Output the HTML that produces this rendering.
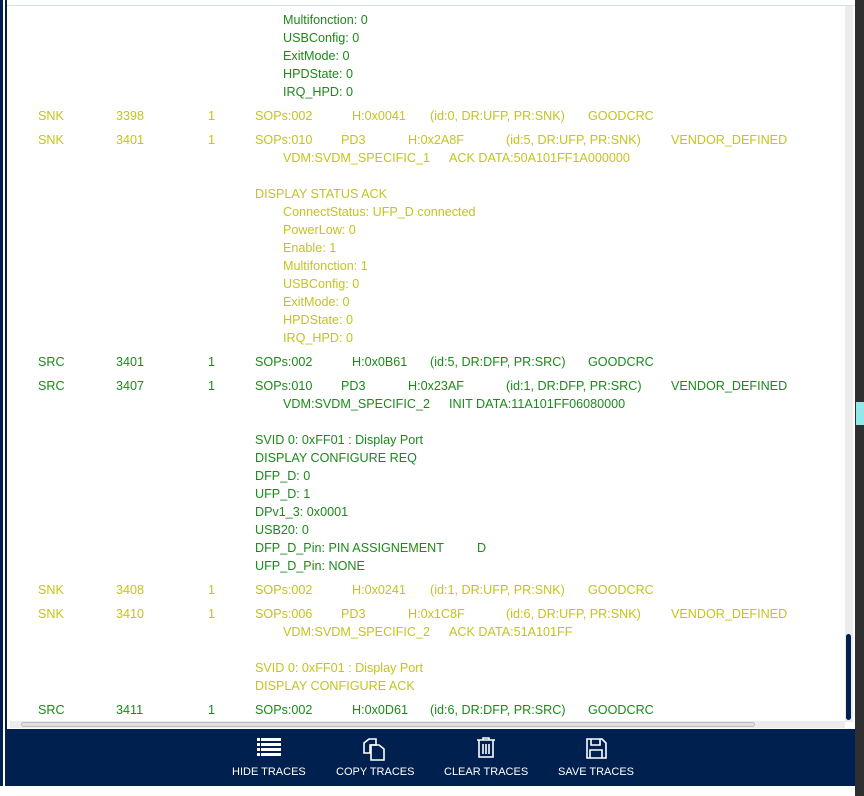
<!DOCTYPE html>
<html><head><meta charset="utf-8"><style>
*{margin:0;padding:0;box-sizing:border-box}
body{width:864px;height:796px;position:relative;overflow:hidden;background:#fff;font-family:"Liberation Sans",Arial,sans-serif;font-size:12.6px}
.t{position:absolute;white-space:nowrap;line-height:16px;height:16px;margin-top:1px}
.g{color:#1a8a1a}.y{color:#c4c41c}
.bar{position:absolute;left:7px;top:729px;width:848px;height:57px;background:#002050}
.lbl{position:absolute;top:766px;color:#fff;font-size:11px;white-space:nowrap}
</style></head><body>
<div style="position:absolute;left:0;top:0;width:7px;height:796px;background:#002050"></div>
<div style="position:absolute;left:3px;top:0;width:2px;height:786px;background:#fff"></div>
<div style="position:absolute;left:0;top:786px;width:7px;height:10px;background:#fff"></div>
<div style="position:absolute;left:7px;top:5px;width:848px;height:1px;background:#cfe0ee"></div>
<div style="position:absolute;left:855px;top:0;width:9px;height:796px;background:#2f2f2f"></div>
<div style="position:absolute;left:856px;top:402px;width:8px;height:23px;background:#90e8e8"></div>
<div style="position:absolute;left:845px;top:6px;width:8px;height:716px;background:#ececec"></div>
<div style="position:absolute;left:846px;top:634px;width:5px;height:86px;background:#002050;border-radius:3px"></div>
<div style="position:absolute;left:10px;top:721px;width:835px;height:7px;background:#ececec"></div>
<div style="position:absolute;left:21px;top:722px;width:734px;height:5px;border:1px solid #bbb;border-radius:3px;background:#e0e0e0"></div>

<div class="t g" style="left:283px;top:11px">Multifonction: 0</div>
<div class="t g" style="left:283px;top:29px">USBConfig: 0</div>
<div class="t g" style="left:283px;top:47px">ExitMode: 0</div>
<div class="t g" style="left:283px;top:65px">HPDState: 0</div>
<div class="t g" style="left:283px;top:83px">IRQ_HPD: 0</div>

<div class="t y" style="left:38px;top:107px">SNK</div><div class="t y" style="left:116px;top:107px">3398</div><div class="t y" style="left:208px;top:107px">1</div><div class="t y" style="left:255px;top:107px">SOPs:002</div><div class="t y" style="left:352px;top:107px">H:0x0041</div><div class="t y" style="left:430px;top:107px">(id:0, DR:UFP, PR:SNK)</div><div class="t y" style="left:588px;top:107px">GOODCRC</div>

<div class="t y" style="left:38px;top:131px">SNK</div><div class="t y" style="left:116px;top:131px">3401</div><div class="t y" style="left:208px;top:131px">1</div><div class="t y" style="left:255px;top:131px">SOPs:010</div><div class="t y" style="left:341px;top:131px">PD3</div><div class="t y" style="left:408px;top:131px">H:0x2A8F</div><div class="t y" style="left:506px;top:131px">(id:5, DR:UFP, PR:SNK)</div><div class="t y" style="left:671px;top:131px">VENDOR_DEFINED</div>
<div class="t y" style="left:283px;top:149px">VDM:SVDM_SPECIFIC_1</div><div class="t y" style="left:449px;top:149px">ACK DATA:50A101FF1A000000</div>
<div class="t y" style="left:255px;top:185px">DISPLAY STATUS ACK</div>
<div class="t y" style="left:283px;top:203px">ConnectStatus: UFP_D connected</div>
<div class="t y" style="left:283px;top:221px">PowerLow: 0</div>
<div class="t y" style="left:283px;top:239px">Enable: 1</div>
<div class="t y" style="left:283px;top:257px">Multifonction: 1</div>
<div class="t y" style="left:283px;top:275px">USBConfig: 0</div>
<div class="t y" style="left:283px;top:293px">ExitMode: 0</div>
<div class="t y" style="left:283px;top:311px">HPDState: 0</div>
<div class="t y" style="left:283px;top:329px">IRQ_HPD: 0</div>

<div class="t g" style="left:38px;top:353px">SRC</div><div class="t g" style="left:116px;top:353px">3401</div><div class="t g" style="left:208px;top:353px">1</div><div class="t g" style="left:255px;top:353px">SOPs:002</div><div class="t g" style="left:352px;top:353px">H:0x0B61</div><div class="t g" style="left:430px;top:353px">(id:5, DR:DFP, PR:SRC)</div><div class="t g" style="left:588px;top:353px">GOODCRC</div>

<div class="t g" style="left:38px;top:377px">SRC</div><div class="t g" style="left:116px;top:377px">3407</div><div class="t g" style="left:208px;top:377px">1</div><div class="t g" style="left:255px;top:377px">SOPs:010</div><div class="t g" style="left:341px;top:377px">PD3</div><div class="t g" style="left:408px;top:377px">H:0x23AF</div><div class="t g" style="left:506px;top:377px">(id:1, DR:DFP, PR:SRC)</div><div class="t g" style="left:671px;top:377px">VENDOR_DEFINED</div>
<div class="t g" style="left:283px;top:395px">VDM:SVDM_SPECIFIC_2</div><div class="t g" style="left:449px;top:395px">INIT DATA:11A101FF06080000</div>
<div class="t g" style="left:255px;top:431px">SVID 0: 0xFF01 : Display Port</div>
<div class="t g" style="left:255px;top:449px">DISPLAY CONFIGURE REQ</div>
<div class="t g" style="left:255px;top:467px">DFP_D: 0</div>
<div class="t g" style="left:255px;top:485px">UFP_D: 1</div>
<div class="t g" style="left:255px;top:503px">DPv1_3: 0x0001</div>
<div class="t g" style="left:255px;top:521px">USB20: 0</div>
<div class="t g" style="left:255px;top:539px">DFP_D_Pin: PIN ASSIGNEMENT</div><div class="t g" style="left:477px;top:539px">D</div>
<div class="t g" style="left:255px;top:557px">UFP_D_Pin: NONE</div>

<div class="t y" style="left:38px;top:581px">SNK</div><div class="t y" style="left:116px;top:581px">3408</div><div class="t y" style="left:208px;top:581px">1</div><div class="t y" style="left:255px;top:581px">SOPs:002</div><div class="t y" style="left:352px;top:581px">H:0x0241</div><div class="t y" style="left:430px;top:581px">(id:1, DR:UFP, PR:SNK)</div><div class="t y" style="left:588px;top:581px">GOODCRC</div>

<div class="t y" style="left:38px;top:605px">SNK</div><div class="t y" style="left:116px;top:605px">3410</div><div class="t y" style="left:208px;top:605px">1</div><div class="t y" style="left:255px;top:605px">SOPs:006</div><div class="t y" style="left:341px;top:605px">PD3</div><div class="t y" style="left:408px;top:605px">H:0x1C8F</div><div class="t y" style="left:506px;top:605px">(id:6, DR:UFP, PR:SNK)</div><div class="t y" style="left:671px;top:605px">VENDOR_DEFINED</div>
<div class="t y" style="left:283px;top:623px">VDM:SVDM_SPECIFIC_2</div><div class="t y" style="left:449px;top:623px">ACK DATA:51A101FF</div>
<div class="t y" style="left:255px;top:659px">SVID 0: 0xFF01 : Display Port</div>
<div class="t y" style="left:255px;top:677px">DISPLAY CONFIGURE ACK</div>

<div class="t g" style="left:38px;top:701px">SRC</div><div class="t g" style="left:116px;top:701px">3411</div><div class="t g" style="left:208px;top:701px">1</div><div class="t g" style="left:255px;top:701px">SOPs:002</div><div class="t g" style="left:352px;top:701px">H:0x0D61</div><div class="t g" style="left:430px;top:701px">(id:6, DR:DFP, PR:SRC)</div><div class="t g" style="left:588px;top:701px">GOODCRC</div>

<div class="bar"></div>
<svg style="position:absolute;left:0;top:729px" width="864" height="40">
 <g fill="#fff">
  <rect x="257" y="9" width="3" height="3"/><rect x="261" y="9" width="20" height="3"/>
  <rect x="257" y="14" width="3" height="3"/><rect x="261" y="14" width="20" height="3"/>
  <rect x="257" y="19" width="3" height="3"/><rect x="261" y="19" width="20" height="3"/>
  <rect x="257" y="24" width="3" height="3"/><rect x="261" y="24" width="20" height="3"/>
 </g>
 <g fill="none" stroke="#fff" stroke-width="1.6">
  <path d="M369 10h7v6h-6v8h-6v-10z"/>
  <path d="M371 16h8l5 4v11h-13z"/>
  <path d="M477 11h18M483 11v-2h6v2M479 11v17h14v-17M483 15v10M486 15v10M489 15v10"/>
  <path d="M587 10h15l4 4v15h-19z M591 10v6h9v-6 M590 29v-8h12v8"/>
 </g>
</svg>
<div class="lbl" style="left:232px">HIDE TRACES</div>
<div class="lbl" style="left:336px">COPY TRACES</div>
<div class="lbl" style="left:444px">CLEAR TRACES</div>
<div class="lbl" style="left:558px">SAVE TRACES</div>
</body></html>
